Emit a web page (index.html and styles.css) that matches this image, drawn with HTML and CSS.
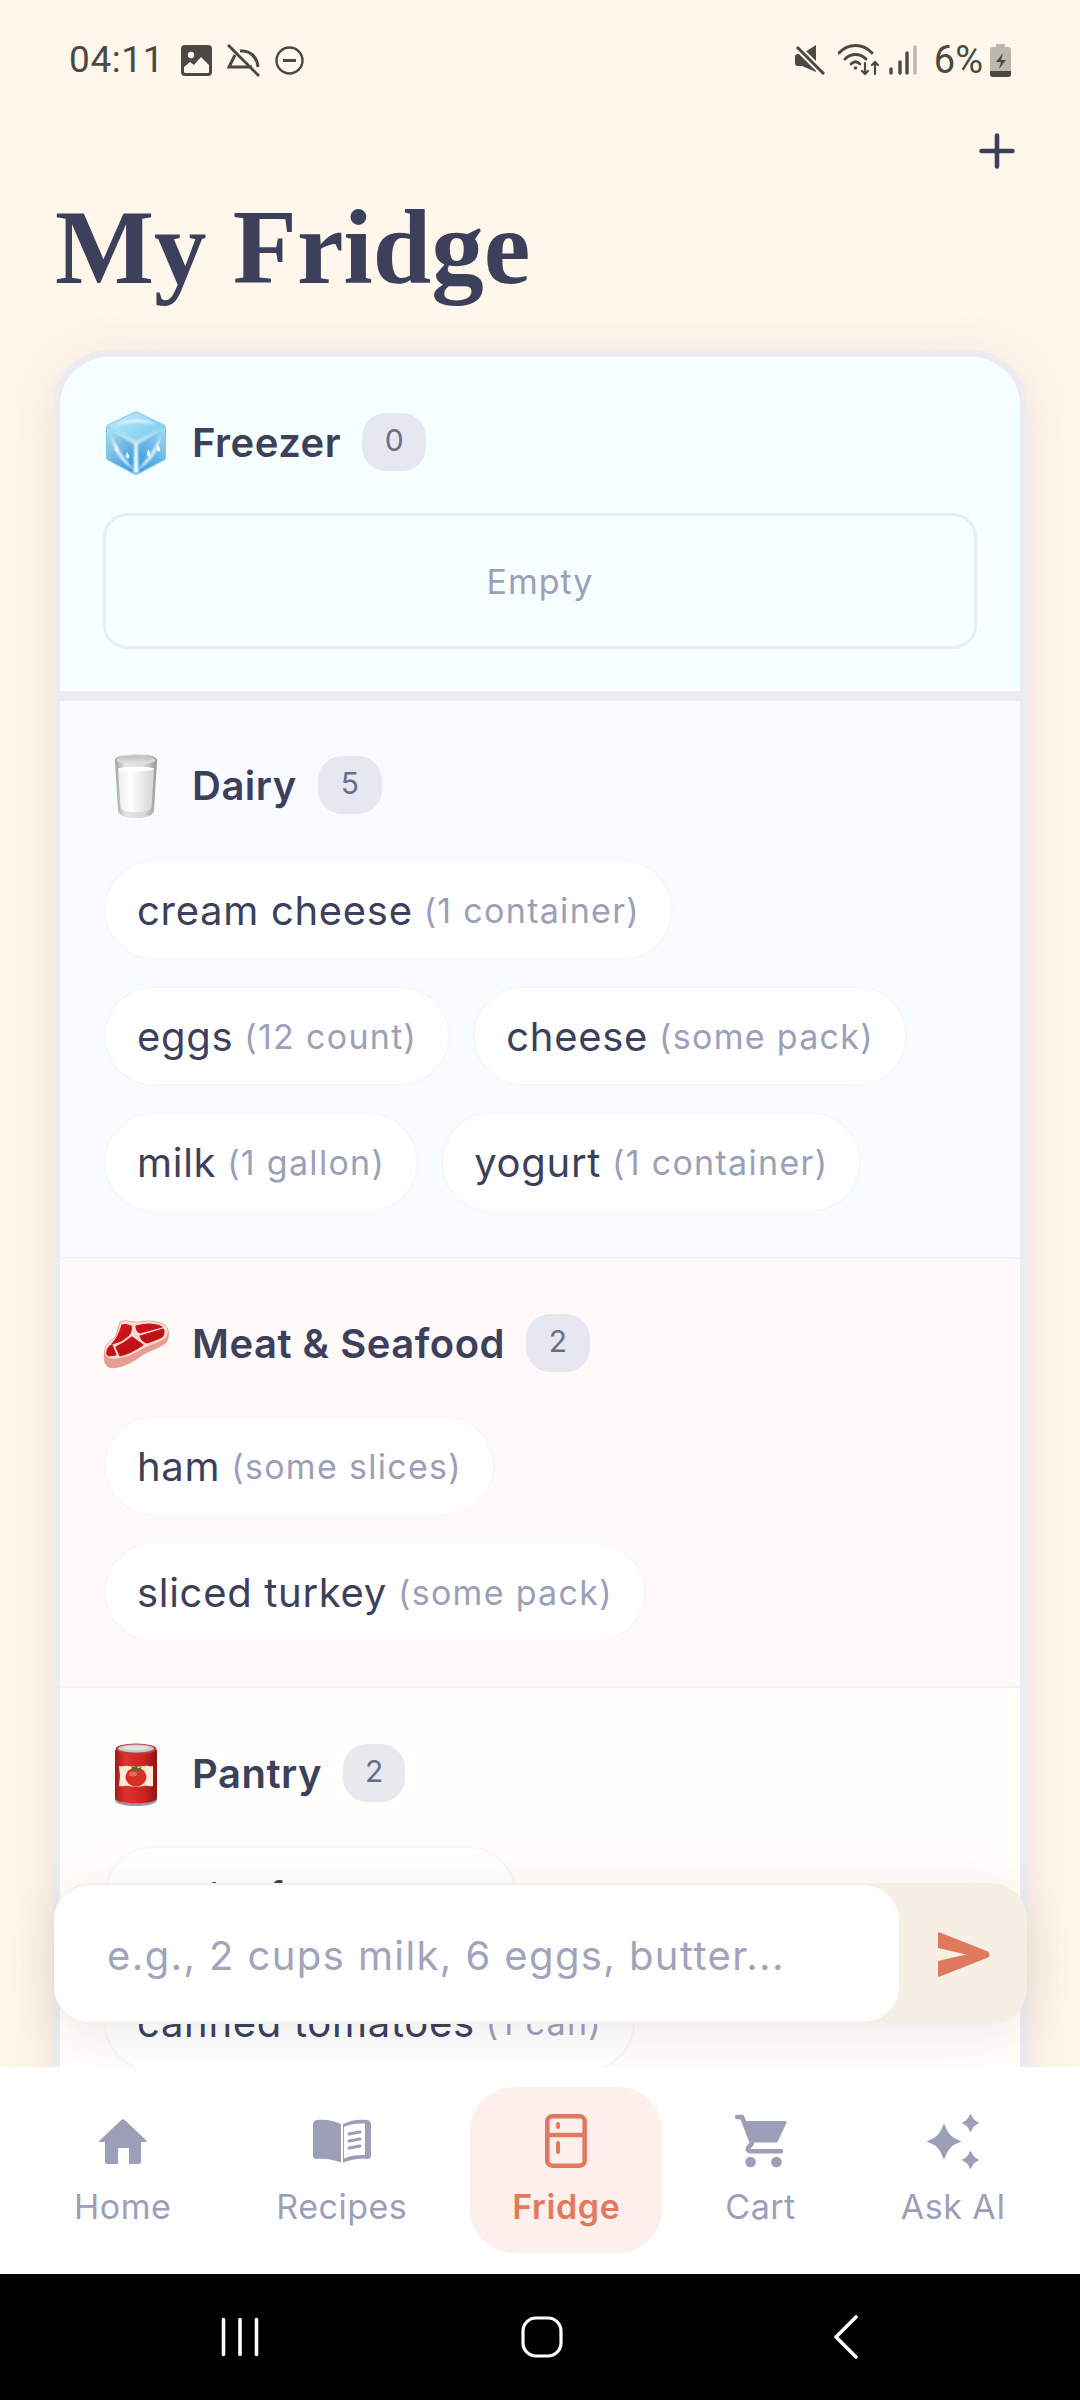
FILE: index.html
```html
<!DOCTYPE html>
<html lang="en">
<head>
<meta charset="utf-8">
<title>My Fridge</title>
<link rel="stylesheet" href="styles.css">
</head>
<body>
<div class="app">
  <header class="status">
    <div class="status-left">
      <span class="time">04:11</span>
      <svg class="si" width="31" height="31" viewBox="0 0 31 31"><rect width="31" height="31" rx="4" fill="#4a4943"/><circle cx="10" cy="10" r="3.200" fill="#fff6ec"/><path d="M3 27v-5l6-5 4 3 7-8 8 8v7a1 1 0 0 1-1 1H4a1 1 0 0 1-1-1z" fill="#fff6ec"/></svg>
      <svg class="si" width="33" height="33" viewBox="0 0 33 33" fill="none" stroke="#4a4943" stroke-width="3"><path d="M1 1l31 31"/><path d="M13 7c9-1 17 5 18 16M8 11L2 23h23"/></svg>
      <svg class="si" width="29" height="29" viewBox="0 0 29 29" fill="none" stroke="#4a4943" stroke-width="2.400"><circle cx="14.500" cy="14.500" r="13"/><path d="M8 14.500h13" stroke-width="3"/></svg>
    </div>
    <div class="status-right">
      <svg class="si mute" width="30" height="30" viewBox="0 0 30 30"><path d="M0 12c0-2 1-3 3-3h4L21 0v27L7 21H3c-2 0-3-1-3-3z" fill="#4a4943"/><path d="M2 2l27 27" stroke="#fff6ec" stroke-width="7"/><path d="M2 2l27 27" stroke="#4a4943" stroke-width="3"/></svg>
      <svg class="si wifi" width="42" height="32" viewBox="0 0 42 32" fill="none" stroke="#4a4943" stroke-linecap="round"><path d="M1 9c9-10 24-10 33 0" stroke-width="3"/><path d="M7 15c6-6 15-6 21 0" stroke-width="3"/><path d="M13 20c3-3 6-3 9 0" stroke-width="2.600"/><circle cx="17.500" cy="24" r="1.800" fill="#4a4943" stroke="none"/><path d="M27 19v11M24 27l3 3 3-3M37 30V18M34 21l3-3 3 3" stroke-width="2.200"/></svg>
      <svg class="si signal" width="28" height="30" viewBox="0 0 28 30" stroke-linecap="round" stroke-width="3.400"><path d="M2 28v-4M11 28V17M18 28V8" stroke="#4a4943"/><path d="M26 28V2" stroke="#bdb8ae"/></svg>
      <span class="pct">6%</span>
      <svg class="si" width="21" height="33" viewBox="0 0 21 33"><path d="M6 0h9v3h3a3 3 0 0 1 3 3v24a3 3 0 0 1-3 3H3a3 3 0 0 1-3-3V6a3 3 0 0 1 3-3h3z" fill="#bdb8ae"/><path d="M0 27h21v3a3 3 0 0 1-3 3H3a3 3 0 0 1-3-3z" fill="#4a4943"/><path d="M13 9l-7 9h5l-2 7 7-9h-5z" fill="#4a4943"/></svg>
    </div>
  </header>

  <main class="screen">
    <div class="add-row">
      <svg width="36" height="36" viewBox="0 0 36 36" stroke="#3d405b" stroke-width="4.600" stroke-linecap="round"><path d="M18 2.500v31M2.500 18h31"/></svg>
    </div>
    <h1 class="title">My Fridge</h1>

    <div class="card">
      <section class="zone zone-freezer">
        <div class="zone-head">
          <span class="emoji">
            <svg width="60" height="64" viewBox="0 0 60 64">
              <defs>
                <linearGradient id="iceTop" x1="0" y1="0" x2="1" y2="1"><stop offset="0" stop-color="#c9edf9"/><stop offset="1" stop-color="#6ac8ec"/></linearGradient>
                <linearGradient id="iceL" x1="0" y1="0" x2=".7" y2="1"><stop offset="0" stop-color="#b4e2f5"/><stop offset="1" stop-color="#3597d8"/></linearGradient>
                <linearGradient id="iceR" x1="1" y1="0" x2=".3" y2="1"><stop offset="0" stop-color="#a0daf3"/><stop offset="1" stop-color="#3a9ada"/></linearGradient>
                <filter id="soft" x="-20%" y="-20%" width="140%" height="140%"><feGaussianBlur stdDeviation="1.300"/></filter>
              </defs>
              <path d="M28 1c1-1 3-1 4 0l25 12c2 1 3 2 3 4v29c0 2-1 3-3 4L33 63c-2 1-4 1-6 0L3 50c-2-1-3-2-3-4V17c0-2 1-3 3-4z" fill="#7cc8ea"/>
              <path d="M30 1l29 14-29 15L1 15z" fill="url(#iceTop)"/>
              <path d="M1 16l29 15v32L1 48z" fill="url(#iceL)"/>
              <path d="M59 16L30 31v32l29-15z" fill="url(#iceR)"/>
              <g filter="url(#soft)" fill="#f2fbff">
                <path d="M10 14c8-6 28-9 40 0-12-4-26-3-40 0z" opacity=".75"/>
                <path d="M2 16l28 14 28-14-28 19z" opacity=".7"/>
                <path d="M28.500 32l-1 30h5l-1-30z"/>
                <path d="M5 24c5 12 14 24 23 35C16 52 7 40 5 24zM55 24c-5 12-14 24-23 35 12-7 21-19 23-35z" opacity=".85"/>
              </g>
              <path d="M10 33c2 3 3 5 2 7-2 1-4-1-3-3zM42 38c2 3 3 5 2 7-2 1-4-1-3-3zM52 34c2 3 3 4 2 6-2 1-4-1-3-3zM21 41c2 3 3 4 2 6-2 1-4-1-3-3z" fill="#e8f8fe"/>
            </svg>
          </span>
          <h2 class="zone-name">Freezer</h2>
          <span class="count">0</span>
        </div>
        <div class="empty">Empty</div>
      </section>

      <section class="zone zone-dairy">
        <div class="zone-head">
          <span class="emoji">
            <svg width="42" height="64" viewBox="0 0 42 64">
              <defs>
                <linearGradient id="glass" x1="0" y1="0" x2="1" y2="0"><stop offset="0" stop-color="#a0a0a0"/><stop offset=".25" stop-color="#e4e4e4"/><stop offset=".7" stop-color="#d8d8d8"/><stop offset="1" stop-color="#949494"/></linearGradient>
                <linearGradient id="milk" x1="0" y1="0" x2="1" y2="0"><stop offset="0" stop-color="#ececec"/><stop offset=".35" stop-color="#fff"/><stop offset="1" stop-color="#d4d4d4"/></linearGradient>
                <linearGradient id="rim" x1="0" y1="0" x2="0" y2="1"><stop offset="0" stop-color="#bdbdbd"/><stop offset="1" stop-color="#e8e8e8"/></linearGradient>
              </defs>
              <path d="M0 6c0-8 42-8 42 0l-3 50c0 11-36 11-36 0z" fill="url(#glass)"/>
              <ellipse cx="21" cy="6" rx="19.500" ry="4.500" fill="url(#rim)"/>
              <path d="M3 15c8-2 28-2 36 0l-2.500 38c0 7-31 7-31 0z" fill="url(#milk)"/>
              <ellipse cx="21" cy="15" rx="18" ry="2.600" fill="#fff"/>
            </svg>
          </span>
          <h2 class="zone-name">Dairy</h2>
          <span class="count">5</span>
        </div>
        <ul class="items">
          <li class="item">cream cheese <span class="qty">(1 container)</span></li>
          <li class="item">eggs <span class="qty">(12 count)</span></li>
          <li class="item">cheese <span class="qty">(some pack)</span></li>
          <li class="item">milk <span class="qty">(1 gallon)</span></li>
          <li class="item">yogurt <span class="qty">(1 container)</span></li>
        </ul>
      </section>

      <section class="zone zone-meat">
        <div class="zone-head">
          <span class="emoji">
            <svg width="66" height="50" viewBox="0 0 66 50">
              <defs>
                <linearGradient id="beef" x1="0" y1="0" x2="1" y2="1"><stop offset="0" stop-color="#d8141a"/><stop offset="1" stop-color="#ad0f14"/></linearGradient>
              </defs>
              <path d="M17 3C24 0 30 4 36 3 44 1 56 2 62 6c5 4 5 14 1 18-7 6-17 8-23 12-8 6-18 12-28 13-7 1-11-3-11-9-1-7 2-13 8-17 4-3 5-13 8-20z" fill="#e79d92"/>
              <path d="M17 3C24 0 30 4 36 3 44 1 56 2 62 6c4 3 4 9 1 13-6 5-16 7-23 11-8 5-17 9-27 10-7 1-11-2-11-7-1-5 2-9 8-13 4-3 5-10 7-17z" fill="#fbdcd4" stroke="#d98c82" stroke-width=".6"/>
              <path d="M19 6c3-1 7 0 9 1 1 3 0 6-2 9l-8 6-9 3c5-5 8-12 10-19zM33 7c8-2 18-3 26 1l-22 6c-2-1-4-3-4-7zM37 17l23-7c2 2 1 6-1 8-5 3-11 4-15 6-3-1-6-4-7-7zM29 18l11 8c-6 4-15 9-23 11l-4-9c6-3 11-6 16-10zM7 27l2-1 4 10-7 1c-3-1-3-6 1-10z" fill="url(#beef)" stroke="#c9141a" stroke-width="1.200" stroke-linejoin="round"/>
            </svg>
          </span>
          <h2 class="zone-name">Meat &amp; Seafood</h2>
          <span class="count">2</span>
        </div>
        <ul class="items">
          <li class="item">ham <span class="qty">(some slices)</span></li>
          <li class="item">sliced turkey <span class="qty">(some pack)</span></li>
        </ul>
      </section>

      <section class="zone zone-pantry">
        <div class="zone-head">
          <span class="emoji">
            <svg width="42" height="63" viewBox="0 0 42 63">
              <defs>
                <linearGradient id="can" x1="0" y1="0" x2="1" y2="0"><stop offset="0" stop-color="#a31818"/><stop offset=".25" stop-color="#df322d"/><stop offset=".7" stop-color="#c92322"/><stop offset="1" stop-color="#8f1414"/></linearGradient>
              </defs>
              <path d="M0 7h42v50c0 8-42 8-42 0z" fill="#9a9a9a"/>
              <path d="M0 7h42v48c0 7-42 7-42 0z" fill="url(#can)"/>
              <ellipse cx="21" cy="6" rx="20.500" ry="5.500" fill="#b04040"/>
              <ellipse cx="21" cy="5.500" rx="18" ry="4" fill="#c8c8c8"/>
              <ellipse cx="21" cy="5" rx="13" ry="2.400" fill="#e2e2e2"/>
              <path d="M4 23c4 1 6-1 9 0 5 1 11 1 16 0 3-1 5 1 9 0v20c-4 1-6-1-9 0-5 1-11 1-16 0-3-1-5 1-9 0l1-10z" fill="#fbeed3"/>
              <ellipse cx="21" cy="34" rx="10.500" ry="9.500" fill="#d92f26"/>
              <ellipse cx="18" cy="31" rx="4" ry="2.500" fill="#ee6a58"/>
              <path d="M21 22l2 3 4-1-2 3 1 2-5-2-5 2 2-3-2-2 4 0z" fill="#3f7d2a"/>
            </svg>
          </span>
          <h2 class="zone-name">Pantry</h2>
          <span class="count">2</span>
        </div>
        <ul class="items">
          <li class="item">pack of tea <span class="qty">(1 can)</span></li>
          <li class="item">canned tomatoes <span class="qty">(1 can)</span></li>
        </ul>
      </section>
    </div>

    <form class="composer">
      <div class="composer-input">e.g., 2 cups milk, 6 eggs, butter...</div>
      <div class="composer-send">
        <svg width="52" height="45" viewBox="0 0 52 45"><path d="M0 1.500C0 .5 1 0 2 .5l48 19c2 1 2 5 0 6L2 44.500c-1 .5-2 0-2-1V29l28-6.500L0 16z" fill="#e07a5f"/></svg>
      </div>
    </form>
  </main>

  <nav class="tabs">
    <a class="tab">
      <span class="tab-icon"><svg width="48" height="45" viewBox="0 0 48 45"><path d="M22.600.8c.8-.8 2-.8 2.800 0l22 20.700c.8.8.4 1.500-.6 1.500H42v19.500a2.500 2.500 0 0 1-2.500 2.500H30V29H19v16H8.500A2.500 2.500 0 0 1 6 42.500V23H1.200c-1 0-1.400-.7-.6-1.500z" fill="#9d9fb9"/></svg></span>
      <span>Home</span>
    </a>
    <a class="tab">
      <span class="tab-icon"><svg width="58" height="44" viewBox="0 0 58 44"><path d="M28 5C21 1 10 0 4 1 2 1 0 3 0 5v32c0 2 2 3 3 3 8-1 17 0 25 3.500zM30 43.500c8-3.500 17-4.500 25-3.500 1 0 3-1 3-3V5c0-2-2-4-4-4-8-1-17 0-24 4z" fill="#9d9fb9"/><path d="M31 8c6-3 14-4 21-3.500V36c-7-.5-15 .5-21 3.500z" fill="#fff"/><path d="M36 15l11-2M36 22l11-2M36 29l11-2" stroke="#9d9fb9" stroke-width="3" stroke-linecap="round"/></svg></span>
      <span>Recipes</span>
    </a>
    <a class="tab tab-active">
      <span class="tab-icon"><svg width="42" height="54" viewBox="0 0 42 54" fill="none" stroke="#e07a5f" stroke-width="4.600"><rect x="2.300" y="2.300" width="37.400" height="49.400" rx="5"/><path d="M2.300 21h37.400"/><path d="M13 10v3M13 29v9" stroke-linecap="round" stroke-width="4"/></svg></span>
      <span>Fridge</span>
    </a>
    <a class="tab">
      <span class="tab-icon"><svg width="52" height="54" viewBox="0 0 52 54"><path d="M9 7h40.500c1.500 0 2.300 1 1.800 2.300L43 27c-.5 1-1.500 1.500-2.500 1.500H17z" fill="#9d9fb9"/><path d="M2.200 3H7l10 26-3.500 4.500c-1.500 2 -.5 3.700 1.500 3.700h31" fill="none" stroke="#9d9fb9" stroke-width="4.600" stroke-linecap="round" stroke-linejoin="round"/><circle cx="15.500" cy="48" r="5.300" fill="#9d9fb9"/><circle cx="41.500" cy="48" r="5.300" fill="#9d9fb9"/></svg></span>
      <span>Cart</span>
    </a>
    <a class="tab">
      <span class="tab-icon"><svg width="52" height="55" viewBox="0 0 52 55" fill="#9d9fb9" stroke="#9d9fb9" stroke-width="1.600" stroke-linejoin="round"><path d="M17 11Q20.500 24 33 27.500 20.500 31 17 44 13.500 31 1 27.500 13.500 24 17 11z"/><path d="M43.500 1Q45.500 7 51 9 45.500 11 43.500 17 41.500 11 36 9 41.500 7 43.500 1z"/><path d="M43.500 38Q45.500 44 51 46 45.500 48 43.500 54 41.500 48 36 46 41.500 44 43.500 38z"/></svg></span>
      <span>Ask AI</span>
    </a>
  </nav>

  <footer class="sysnav">
    <svg width="38" height="40" viewBox="0 0 38 40" stroke="#fff" stroke-width="3.600" stroke-linecap="round"><path d="M2.500 2.500v35M19 2.500v35M35.500 2.500v35"/></svg>
    <svg width="42" height="42" viewBox="0 0 42 42" fill="none" stroke="#fff" stroke-width="3.200"><rect x="2" y="2" width="38" height="38" rx="13"/></svg>
    <svg width="24" height="44" viewBox="0 0 24 44" fill="none" stroke="#fff" stroke-width="3.600" stroke-linecap="round" stroke-linejoin="round"><path d="M22 2L2 22l20 20"/></svg>
  </footer>
</div>
</body>
</html>
```

FILE: styles.css
```css
* { box-sizing: border-box; }
html, body { margin: 0; padding: 0; }
body {
  width: 1080px;
  height: 2400px;
  overflow: hidden;
  background: #fff6ec;
  font-family: "Inter", "Liberation Sans", sans-serif;
  color: #3d405b;
}
.app { display: flex; flex-direction: column; height: 2400px; }

.status {
  height: 90px;
  flex: none;
  padding: 41px 69px 0 69px;
  display: flex;
  justify-content: space-between;
  align-items: flex-start;
  background: #fff6ec;
  color: #4a4943;
  font-family: "Roboto", "Liberation Sans", sans-serif;
  font-size: 37px;
  line-height: 38px;
}
.status-left, .status-right { display: flex; align-items: center; }
.status-left { gap: 15px; }
.status-right { gap: 9px; }
.time { margin-right: 2px; letter-spacing: .6px; }
.mute { margin-right: 4px; }
.signal { margin-right: 8px; }
.pct { margin-right: -2px; font-size: 38px; }
.si { flex: none; display: block; }

.screen { flex: 1; position: relative; overflow: hidden; min-height: 0; }
.add-row { display: flex; justify-content: flex-end; padding: 43px 65px 0 0; height: 80px; }
.add-row svg { display: block; }
.title {
  margin: 18px 0 0;
  padding-left: 55px;
  font-family: "Liberation Serif", serif;
  font-weight: 700;
  font-size: 105px;
  line-height: 120px;
  color: #3d405b;
}

.card {
  margin: 42px 53px 0;
  border: 7px solid #ecebf2;
  border-bottom: 0;
  border-radius: 56px 56px 0 0;
  overflow: hidden;
  box-shadow: 0 8px 50px rgba(120, 90, 50, .12);
  width: 974px;
}
.zone { padding: 52px 43px 42px; }
.zone-freezer { background: #f5fffe; padding-top: 53px; border-bottom: 10px solid #ecebf2; }
.zone-dairy { background: #f8fbff; padding-bottom: 45px; border-bottom: 2px solid #f0f1f6; }
.zone-meat { background: #fff9f9; padding-bottom: 44px; border-bottom: 2px solid #f5f2f3; }
.zone-pantry { background: #fffefa; padding-top: 53px; padding-bottom: 120px; }

.zone-head { display: flex; align-items: center; height: 66px; }
.emoji { width: 66px; flex: none; display: flex; justify-content: center; margin-right: 23px; }
.emoji svg { display: block; }
.zone-name { margin: 0; font-size: 40px; font-weight: 600; line-height: 48px; color: #3d405b; letter-spacing: .5px; }
.count {
  margin-left: 21px;
  margin-top: -3px;
  width: 64px;
  height: 58px;
  border-radius: 24px;
  background: #e6e8f1;
  color: #6a6c8a;
  font-size: 30px;
  display: flex;
  align-items: center;
  justify-content: center;
  padding-bottom: 3px;
}
.zone-pantry .count { background: #e8e9ee; width: 62px; }
.empty {
  margin-top: 37px;
  height: 136px;
  border: 3px solid #e8eef1;
  border-radius: 24px;
  color: #9d9fb9;
  font-size: 34px;
  letter-spacing: 1px;
  display: flex;
  align-items: center;
  justify-content: center;
}

.items {
  list-style: none;
  margin: 41px 0 0 1px;
  padding: 0;
  display: flex;
  flex-wrap: wrap;
  gap: 26px 23px;
}
.zone-meat .items { margin-top: 39px; }
.zone-pantry .items { margin-top: 39px; }
.item {
  height: 100px;
  border-radius: 50px;
  background: #fff;
  border: 2px solid #fbf6f6;
  padding: 0 31px;
  display: flex;
  align-items: center;
  white-space: pre;
  font-size: 40px;
  letter-spacing: .7px;
  color: #3d405b;
}
.qty { font-size: 34px; letter-spacing: 1.300px; color: #9d9fb9; margin-left: -1px; }

.composer {
  position: absolute;
  left: 54px;
  top: 1793px;
  width: 973px;
  height: 141px;
  margin: 0;
  border-radius: 36px;
  background: #f5efe6;
  box-shadow: 0 10px 50px rgba(40, 40, 50, .09);
  display: flex;
}
.composer-input {
  flex: none;
  width: 845px;
  height: 137px;
  margin-top: 2px;
  background: #fff;
  border-radius: 36px;
  padding: 3px 0 0 53px;
  display: flex;
  align-items: center;
  font-size: 40px;
  letter-spacing: 1.400px;
  color: #a2a3bc;
}
.composer-send { flex: 1; display: flex; align-items: center; padding-left: 39px; padding-top: 2px; }
.composer-send svg { display: block; }

.tabs {
  flex: none;
  position: relative;
  height: 207px;
  background: #fff;
  display: flex;
  justify-content: space-between;
  padding: 20px 32px 21px;
}
.tab {
  display: flex;
  flex-direction: column;
  align-items: center;
  padding: 26px 42px 0;
  border-radius: 44px;
  color: #9d9fb9;
  font-size: 34px;
  letter-spacing: .5px;
  line-height: 42px;
}
.tab-icon { display: flex; align-items: center; justify-content: center; height: 56px; margin-bottom: 17px; }
.tab-icon svg { display: block; }
.tab-active { background: #fdf0ec; color: #e07a5f; font-weight: 600; letter-spacing: .6px; }

.sysnav {
  flex: none;
  height: 126px;
  background: #000;
  display: grid;
  grid-template-columns: 300px 313px auto;
  justify-items: start;
  align-items: center;
  padding-left: 221px;
}
.sysnav svg { display: block; }
```
